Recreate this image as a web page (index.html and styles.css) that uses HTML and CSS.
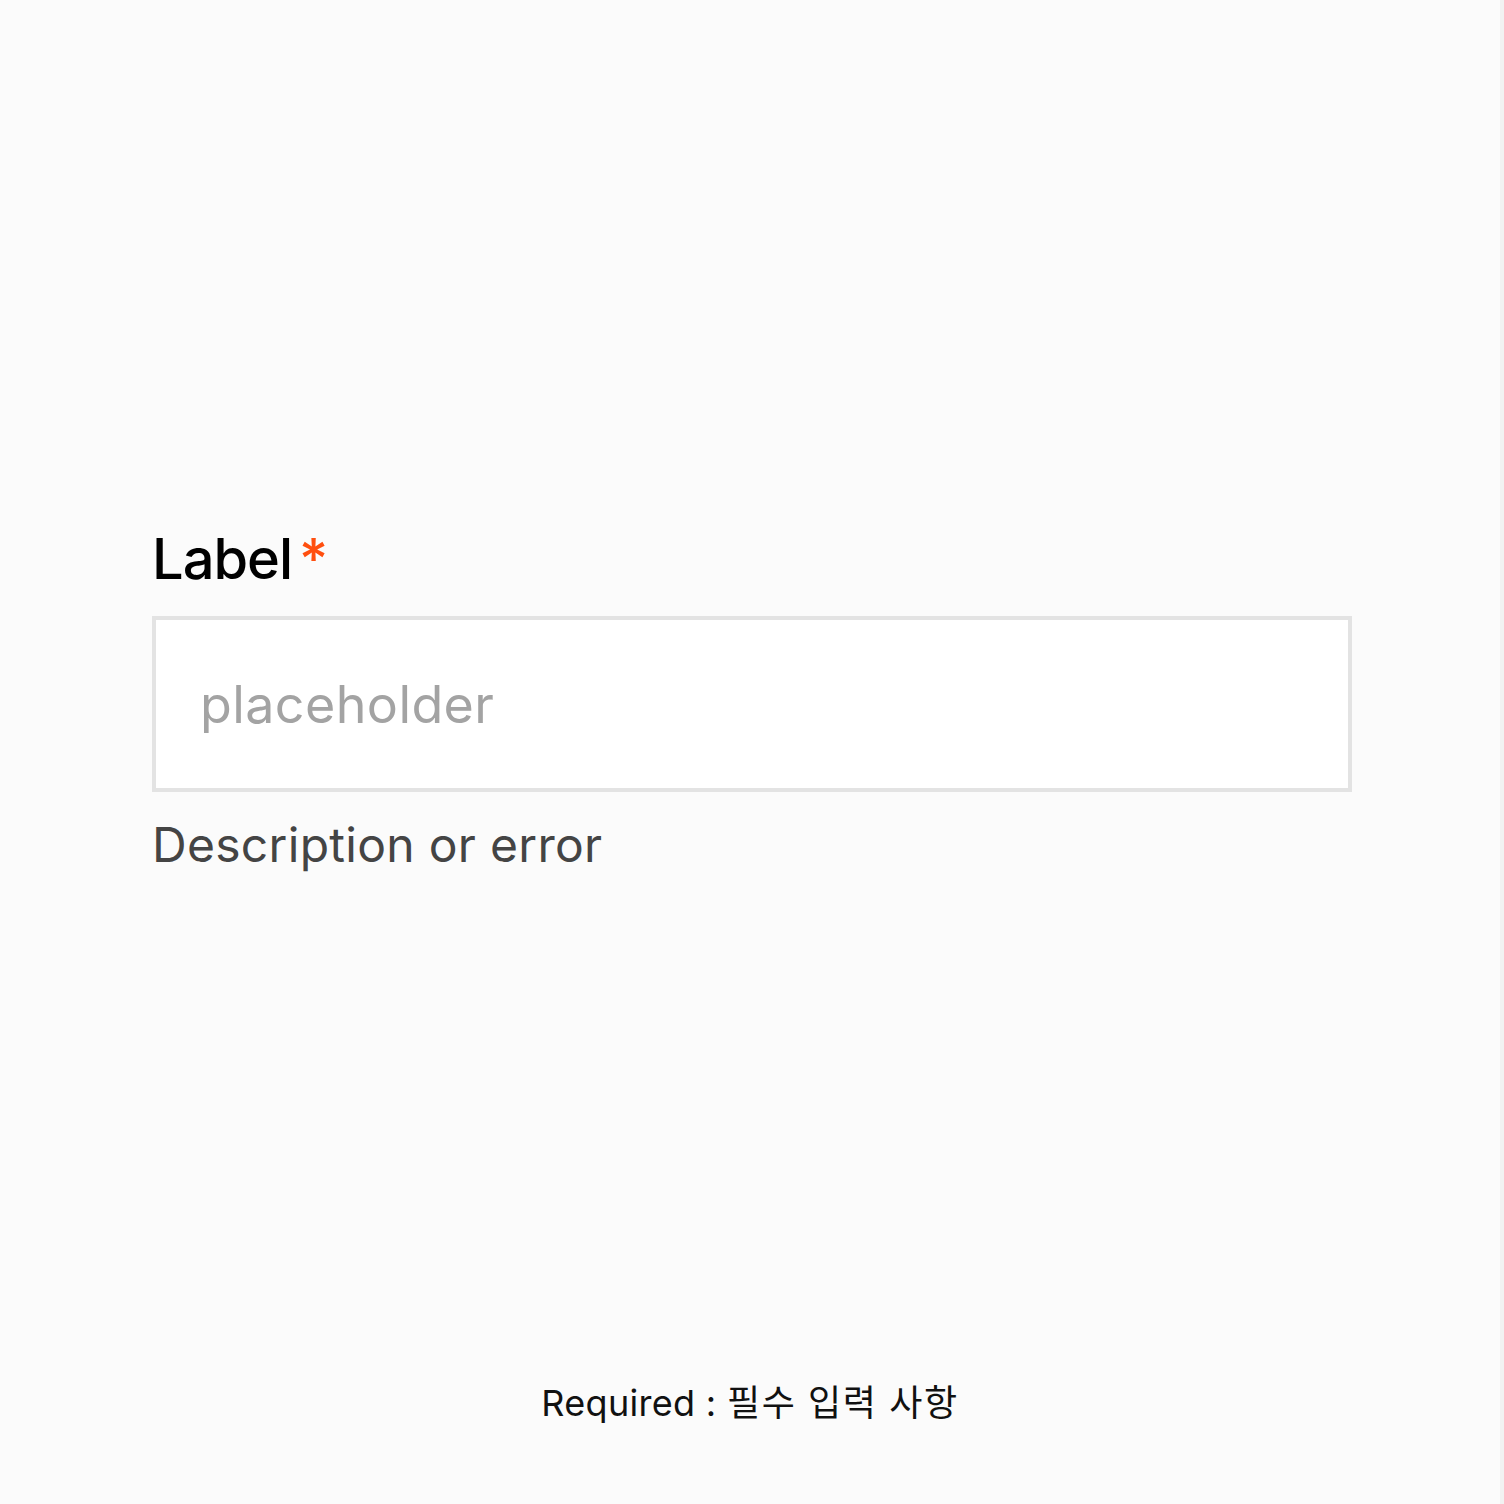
FILE: index.html
```html
<!DOCTYPE html>
<html lang="ko">
<head>
<meta charset="utf-8">
<title>Text field</title>
<link rel="stylesheet" href="styles.css">
</head>
<body>
<div class="page">
  <main class="stage">
    <div class="field">
      <label class="field-label" for="f1">Label<span class="required">*</span></label>
      <input class="field-input" id="f1" type="text" placeholder="placeholder">
      <p class="field-desc">Description or error</p>
    </div>
  </main>
  <footer class="legend">Required : <span class="legend-ko">필수 입력 사항</span></footer>
</div>
</body>
</html>
```

FILE: styles.css
```css
html, body {
  margin: 0;
  padding: 0;
}
body {
  background: #fbfbfb;
  font-family: Inter, "Noto Sans CJK KR", sans-serif;
}
.page {
  box-sizing: border-box;
  height: 1504px;
  border-right: 4px solid #f2f2f2;
  display: flex;
  flex-direction: column;
}
.stage {
  padding: 525px 152px 0 152px;
}
.field {
  display: flex;
  flex-direction: column;
  width: 1200px;
}
.field-label {
  font-size: 56px;
  line-height: 68px;
  font-weight: 500;
  letter-spacing: -1px;
  color: #000;
  margin-bottom: 23px;
}
.required {
  color: #ff4f0f;
  margin-left: 7px;
}
.field-input {
  box-sizing: border-box;
  width: 1200px;
  height: 176px;
  margin: 0;
  border: 4px solid #e3e3e3;
  border-radius: 0;
  background: #fff;
  padding: 0 44px;
  font-family: Inter, sans-serif;
  font-size: 52px;
  letter-spacing: 0.4px;
  color: #222;
  outline: none;
}
.field-input::placeholder {
  color: #a3a3a3;
  opacity: 1;
}
.field-desc {
  margin: 24px 0 0 0;
  font-size: 48px;
  line-height: 58px;
  letter-spacing: 0.3px;
  color: #444;
}
.legend {
  margin-top: auto;
  margin-bottom: 79px;
  text-align: center;
  font-size: 36px;
  line-height: 44px;
  letter-spacing: 0.3px;
  color: #111;
}
.legend-ko {
  letter-spacing: 1.6px;
}
```
